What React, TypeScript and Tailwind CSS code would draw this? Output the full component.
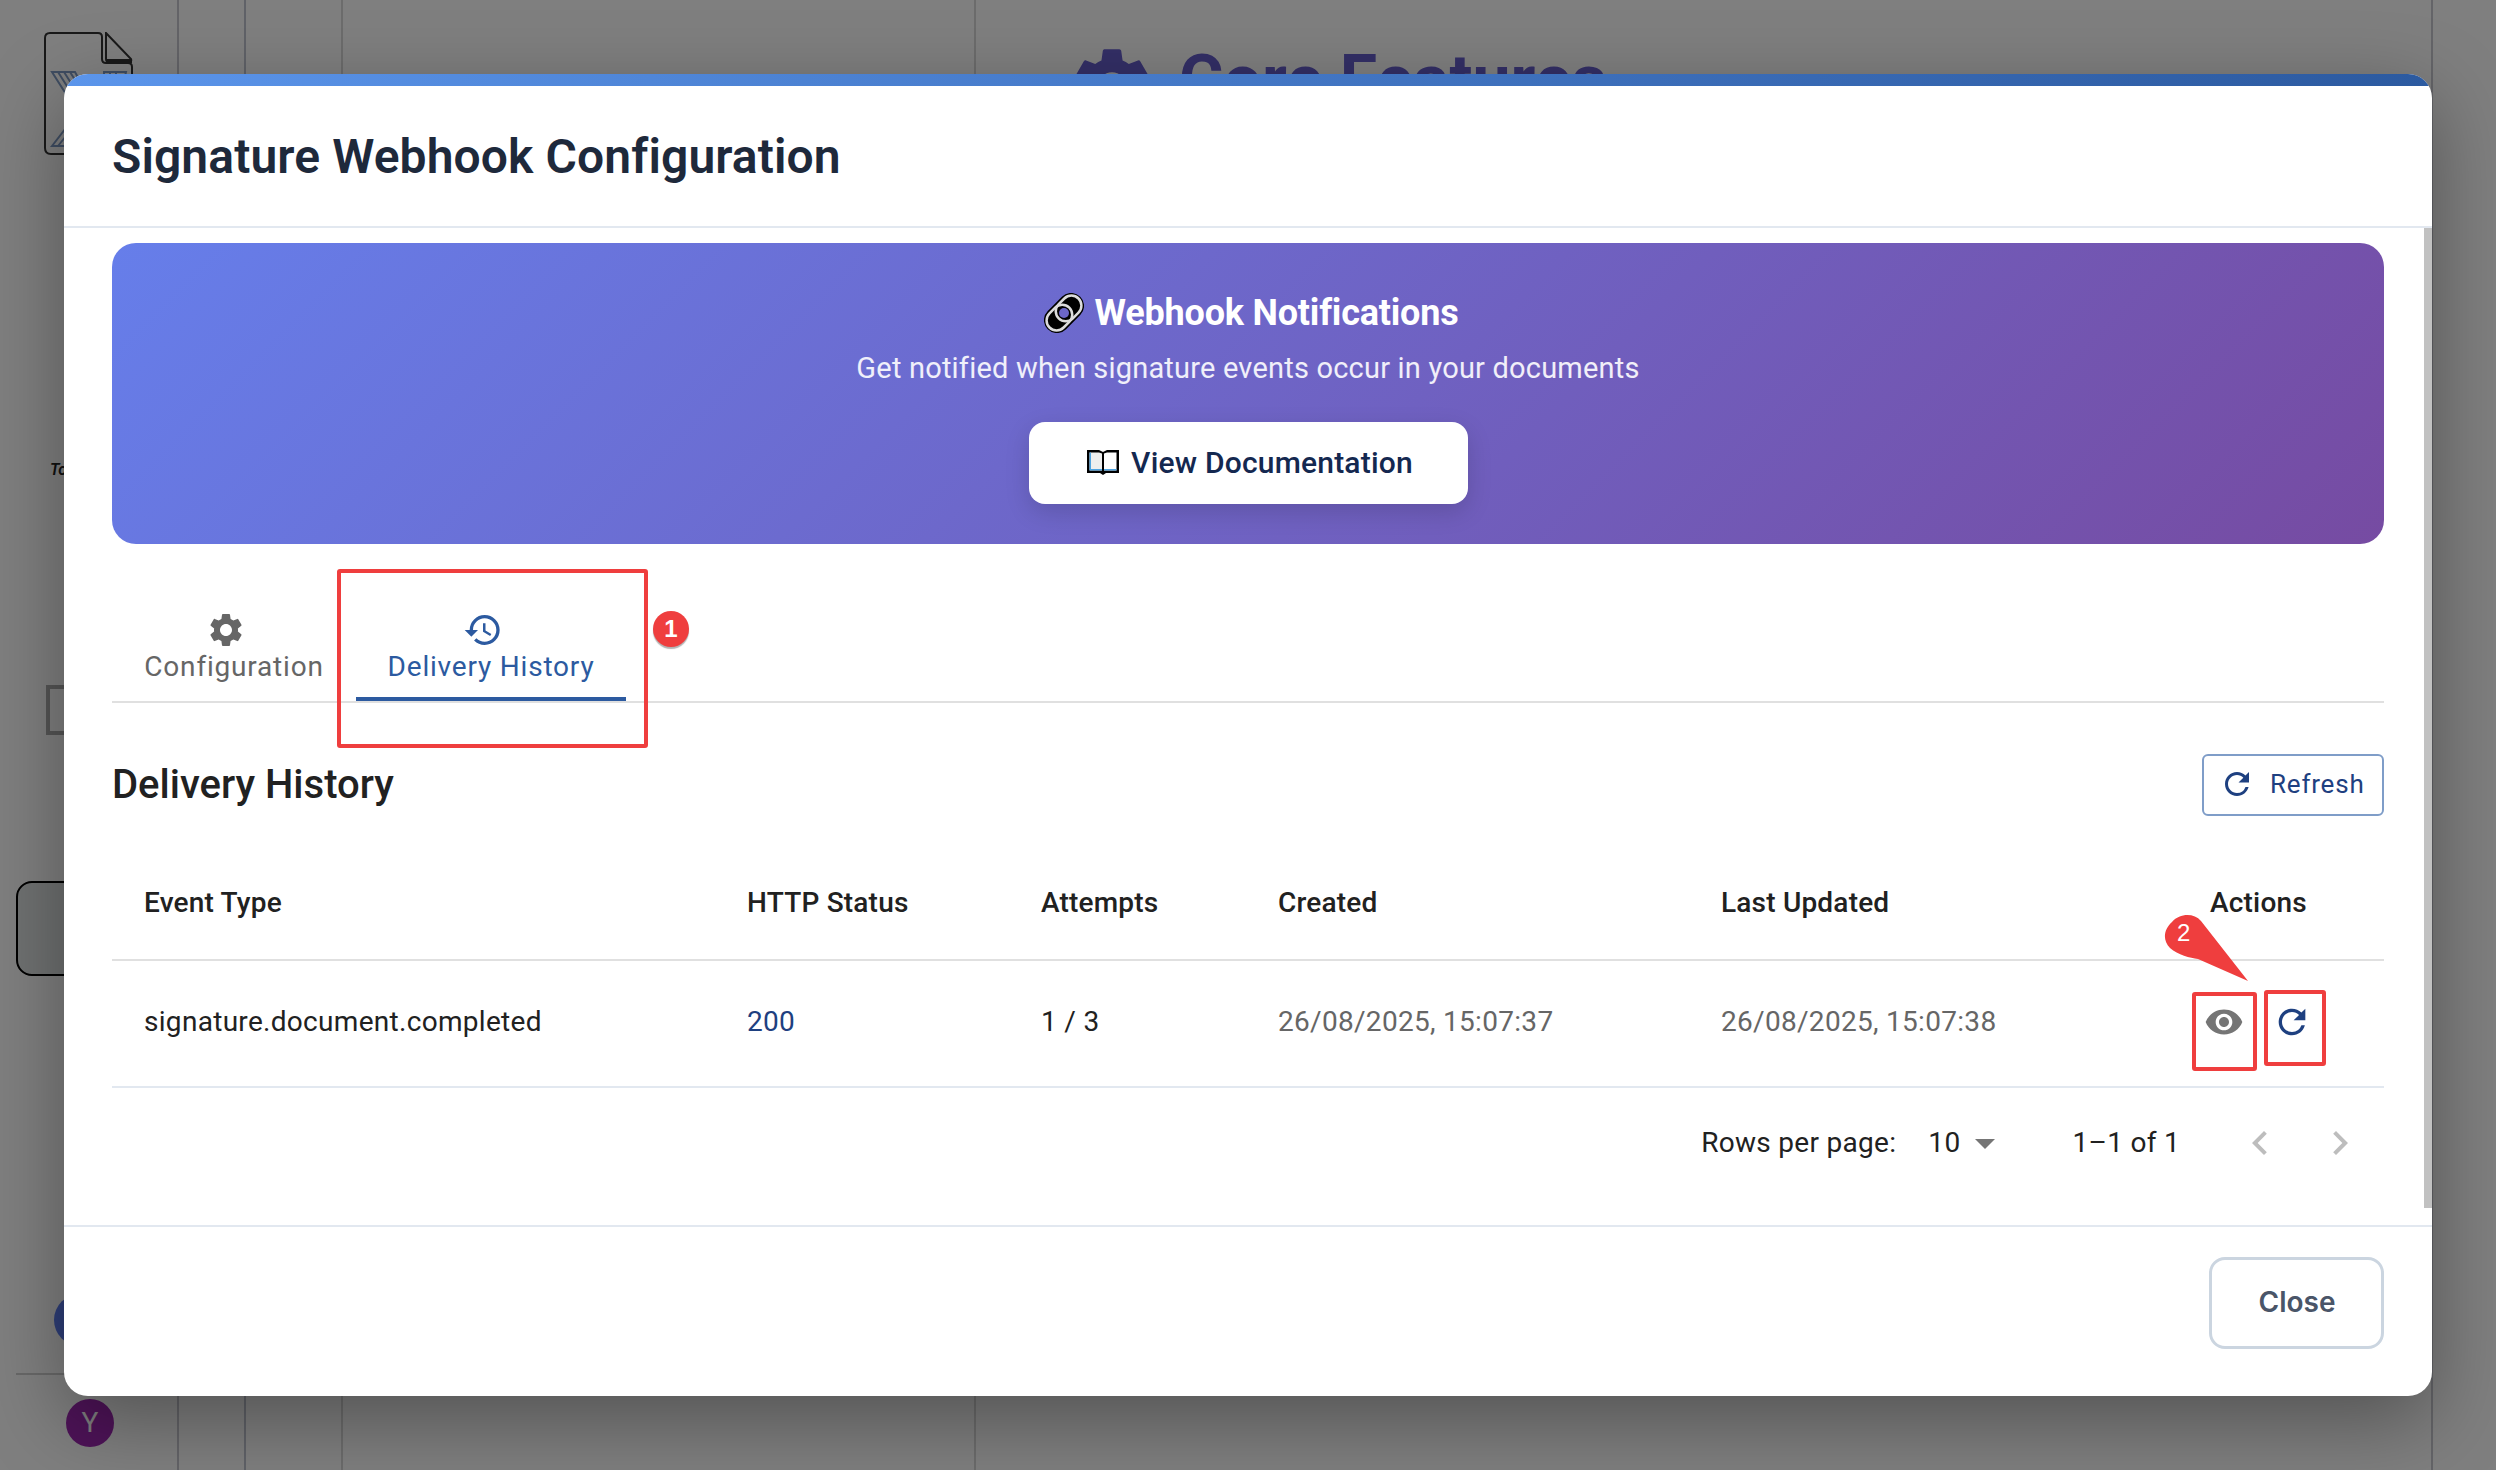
import React from 'react';
import {
  MdArrowDropDown,
  MdHistory,
  MdKeyboardArrowLeft,
  MdKeyboardArrowRight,
  MdRefresh,
  MdSettings,
  MdVisibility,
} from 'react-icons/md';

const LinkEmoji = () => (
  <svg width="40" height="40" viewBox="0 0 40 40" className="shrink-0">
    <g transform="rotate(-45 20 20)" fill="none">
      <rect x="-3" y="7" width="46" height="26" rx="13" fill="#000" />
      <rect x="-0.5" y="10" width="28" height="20" rx="10" stroke="#dcdcdc" strokeWidth="2.5" />
      <rect x="12.5" y="10" width="28" height="20" rx="10" stroke="#dcdcdc" strokeWidth="2.5" />
      <circle cx="20" cy="20" r="5" fill="#6c66c9" />
    </g>
  </svg>
);

const BookEmoji = () => (
  <svg width="34" height="28" viewBox="0 0 34 28" className="shrink-0">
    <path d="M1 2h12l4 2 4-2h12v23H20l-3 2-3-2H1z" fill="#000" />
    <path d="M3.5 4.500H13l3 1v17H3.500z" fill="#eee" />
    <path d="M18 5.500l3-1h9.500v18H18z" fill="#fff" />
    <path d="M3.500 4.500h1.500v18H3.500zM3.500 21h12.500v1.500H3.500zM18 21h12.500v1.500H18z" fill="#4fa3e0" />
  </svg>
);

const DocIcon = () => (
  <svg width="90" height="124" viewBox="0 0 90 124" className="absolute left-[44px] top-[32px]" fill="none">
    <path
      d="M6 1h48q4 0 4 4v22q0 4 4 4h22q4 0 4 4v81q0 6-6 6H7q-6 0-6-6V6q0-5 5-5z"
      stroke="#333"
      strokeWidth="2"
    />
    <path d="M62 1l25 26q1 3-2 3H65q-3 0-3-3z" stroke="#333" strokeWidth="2" />
    <path d="M62 29h26" stroke="#333" strokeWidth="4" />
    <path
      d="M8 40h23l12 22H22zM14 40l14 22M20 40l14 22M26 40l14 22M60 40h22l-6 24H60zM66 40v24M72 40v24"
      stroke="#7f9bc4"
      strokeWidth="2"
    />
    <path d="M8 114l14-18v18zM14 114l8-10" stroke="#7f9bc4" strokeWidth="2" />
  </svg>
);

const Background = () => (
  <div className="absolute inset-0 flex bg-white">
    <div className="w-[179px] border-r-2 border-[#c8c8d0]" />
    <div className="w-[67px] border-r-2 border-[#c0c4d0]" />
    <div className="w-[97px] border-r-2 border-[#d8d8d8]" />
    <div className="w-[633px] border-r-2 border-[#d8d8d8]" />
    <div className="w-[1457px] border-r-2 border-[#c8c8d0]" />
    <DocIcon />
    <div className="absolute left-[1066px] top-[40px] flex items-start gap-[21px] text-[#665ecc]">
      <MdSettings size={92} />
      <span className="mt-[4px] font-['Roboto',sans-serif] text-[68px] font-bold leading-[72px]">Core Features</span>
    </div>
    <span className="absolute left-[50px] top-[458px] font-['Roboto',sans-serif] text-[16px] font-semibold italic text-[#222]">To</span>
    <div className="absolute left-[46px] top-[685px] h-[50px] w-[60px] border-4 border-[#aaa]" />
    <div className="absolute left-[16px] top-[881px] h-[95px] w-[90px] rounded-[16px] border-2 border-black bg-[#dfe2e2]" />
    <div className="absolute left-[54px] top-[1294px] size-[52px] rounded-full bg-[#5c7df0]" />
    <div className="absolute left-[16px] top-[1373px] h-[2px] w-[90px] bg-[#d0d0d0]" />
    <div className="absolute left-[66px] top-[1399px] flex size-[48px] items-center justify-center rounded-full bg-[#9c27b0] font-['Roboto',sans-serif] text-[28px] text-white">
      Y
    </div>
  </div>
);

const columns = 'grid grid-cols-[603px_294px_237px_443px_489px_206px]';

const Table = () => (
  <div className="mt-[31px] font-['Roboto',sans-serif] text-[28px]">
    <div className={`${columns} h-[114px] items-center border-b-2 border-[#e0e0e0] font-medium tracking-[0.2px] text-[#212121]`}>
      <span className="pl-[32px]">Event Type</span>
      <span className="pl-[32px]">HTTP Status</span>
      <span className="pl-[32px]">Attempts</span>
      <span className="pl-[32px]">Created</span>
      <span className="pl-[32px]">Last Updated</span>
      <span className="pl-[32px]">Actions</span>
    </div>
    <div className={`${columns} h-[127px] items-center border-b-2 border-[#e2e8f0] pb-[3px] tracking-[0.3px] text-[#212121]`}>
      <span className="pl-[32px]">signature.document.completed</span>
      <span className="pl-[32px] text-[#1e4080]">200</span>
      <span className="pl-[32px]">1 / 3</span>
      <span className="pl-[32px] text-[#666]">26/08/2025, 15:07:37</span>
      <span className="pl-[32px] text-[#666]">26/08/2025, 15:07:38</span>
      <div className="flex items-center pl-[26px]">
        <MdVisibility size={40} className="text-[#757575]" />
        <MdRefresh size={40} className="ml-[28px] text-[#1e4080]" />
      </div>
    </div>
  </div>
);

const Pagination = () => (
  <div className="flex h-[110px] items-center justify-end pr-[20px] font-['Roboto',sans-serif] text-[28px] tracking-[0.3px] text-[#212121]">
    <span>Rows per page:</span>
    <span className="ml-[32px]">10</span>
    <MdArrowDropDown size={48} className="ml-[1px] text-[#757575]" />
    <span className="ml-[63px]">1–1 of 1</span>
    <MdKeyboardArrowLeft size={48} className="ml-[56px] text-[#bdbdbd]" />
    <MdKeyboardArrowRight size={48} className="ml-[32px] text-[#bdbdbd]" />
  </div>
);

const Annotations = () => (
  <>
    <div className="absolute left-[337px] top-[569px] h-[179px] w-[311px] rounded-[3px] border-4 border-[#ef3e3e]" />
    <div className="absolute left-[653px] top-[611px] flex size-[36px] items-center justify-center rounded-full bg-[#ef3e3e] font-['Liberation_Sans',sans-serif] text-[24px] font-bold text-white shadow-[0_2px_1px_rgba(0,0,0,0.3)]">
      1
    </div>
    <div className="absolute left-[2192px] top-[992px] h-[79px] w-[65px] rounded-[3px] border-4 border-[#ef3e3e]" />
    <div className="absolute left-[2264px] top-[990px] h-[76px] w-[62px] rounded-[3px] border-4 border-[#ef3e3e]" />
    <svg width="90" height="70" viewBox="0 0 90 70" className="absolute left-[2160px] top-[914px]">
      <path d="M12 8c8-9 22-9 29-1l47 60-50-22C30 44 18 41 10 34 2 26 4 15 12 8z" fill="#ef3e3e" />
    </svg>
    <span className="absolute left-[2177px] top-[918px] font-['Liberation_Sans',sans-serif] text-[24px] leading-[30px] text-white">2</span>
  </>
);

export default function App() {
  return (
    <div className="relative h-[1470px] w-[2496px] overflow-hidden">
      <Background />
      <div className="absolute inset-0 bg-black/50" />

      <div className="absolute left-[64px] top-[74px] flex h-[1322px] w-[2368px] flex-col overflow-hidden rounded-[24px] bg-white shadow-[0_24px_80px_rgba(0,0,0,0.35)]">
        <div className="h-[12px] shrink-0 bg-gradient-to-r from-[#5b95eb] to-[#2c5aa0]" />
        <div className="flex h-[142px] shrink-0 items-center border-b-2 border-[#e2e8f0] pl-[48px] pt-[2px]">
          <h2 className="font-['Roboto',sans-serif] text-[48px] font-semibold tracking-[0.1px] text-[#1e293b]">
            Signature Webhook Configuration
          </h2>
        </div>

        <div className="flex min-h-0 flex-1">
          <div className="min-w-0 flex-1 pl-[48px] pr-[40px] pt-[15px]">
            <div className="flex h-[301px] flex-col items-center rounded-[24px] bg-[linear-gradient(135deg,#667eea,#764ba2)] pt-[50px] font-['Roboto',sans-serif] text-white">
              <div className="flex h-[40px] items-center gap-[11px] pl-[6px]">
                <LinkEmoji />
                <h3 className="text-[36px] font-bold tracking-[-0.2px]">Webhook Notifications</h3>
              </div>
              <p className="mt-[14px] text-[29px] leading-[42px] tracking-[0.2px] text-white/90">
                Get notified when signature events occur in your documents
              </p>
              <button className="mt-[33px] flex h-[82px] w-[439px] items-center justify-center gap-[11px] rounded-[16px] bg-white pb-[2px] pl-[3px] text-[30px] font-medium tracking-[0.2px] text-[#142850] shadow-[0_8px_24px_rgba(0,0,0,0.15)]">
                <BookEmoji />
                View Documentation
              </button>
            </div>

            <div className="mt-[44px] flex h-[115px] border-b-2 border-[#e0e0e0] font-['Roboto',sans-serif] text-[28px] tracking-[0.8px]">
              <div className="flex h-full w-[244px] flex-col items-center pt-[22px] text-[#666]">
                <MdSettings size={40} className="mr-4" />
                <span className="leading-[34px]">Configuration</span>
              </div>
              <div className="relative flex h-full w-[270px] flex-col items-center pt-[22px] text-[#2c5aa0]">
                <MdHistory size={40} className="mr-4" />
                <span className="leading-[34px]">Delivery History</span>
                <div className="absolute inset-x-0 bottom-0 h-[4px] bg-[#2c5aa0]" />
              </div>
            </div>

            <div className="mt-[51px] flex h-[62px] items-center justify-between font-['Roboto',sans-serif]">
              <h3 className="text-[40px] font-medium text-[#212121]">Delivery History</h3>
              <button className="flex h-[62px] w-[182px] items-center gap-[15px] rounded-[6px] border-2 border-[#7f9dc8] pb-[2px] pl-[15px] text-[26px] tracking-[0.8px] text-[#1e4080]">
                <MdRefresh size={36} />
                Refresh
              </button>
            </div>

            <Table />
            <Pagination />
          </div>
          <div className="w-[8px] shrink-0">
            <div className="h-[980px] bg-[#c1c1c1]" />
          </div>
        </div>

        <div className="flex h-[171px] shrink-0 justify-end border-t-2 border-[#e2e8f0] pr-[48px] pt-[30px]">
          <button className="h-[92px] w-[175px] rounded-[16px] border-[3px] border-[#cbd5e0] pb-[3px] pl-[1px] font-['Inter',sans-serif] text-[28px] font-semibold text-[#4a5568]">
            Close
          </button>
        </div>
      </div>

      <Annotations />
    </div>
  );
}
